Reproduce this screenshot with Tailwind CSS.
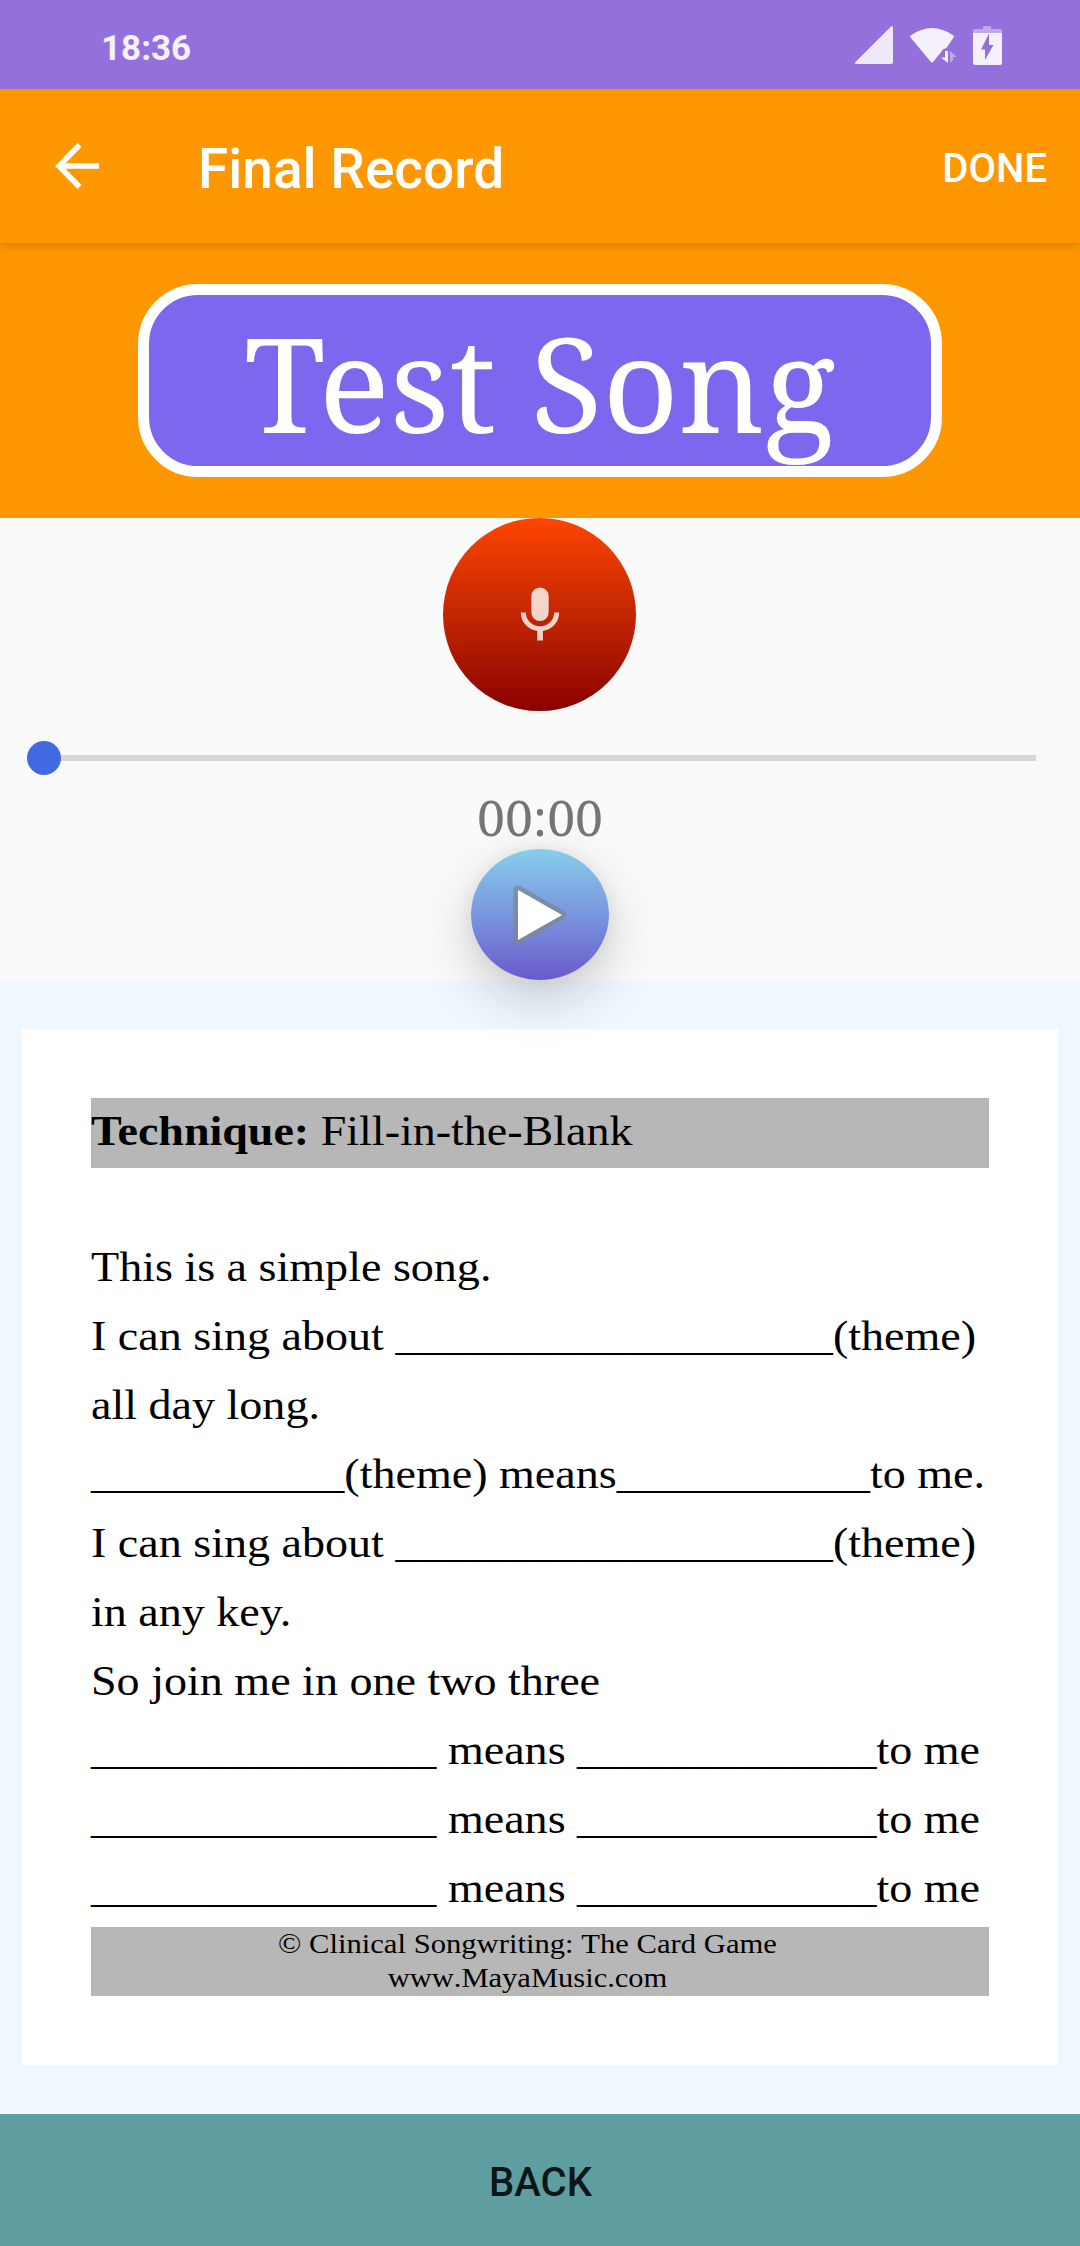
<!DOCTYPE html>
<html lang="en">
<head>
<meta charset="utf-8">
<title>Final Record</title>
<script src="https://cdn.jsdelivr.net/npm/@tailwindcss/browser@4"></script>
</head>
<body class="w-[1080px] h-[2246px] overflow-hidden flex flex-col bg-[#fafafa] font-['Roboto',sans-serif]">
  <header class="h-[89px] shrink-0 bg-[#9370db] flex items-center justify-between relative z-20">
    <span class="ml-[101px] mt-[8px] text-[35px] leading-none font-bold text-white/90">18:36</span>
    <svg class="w-[240px] h-[89px]" viewBox="0 0 240 89">
      <path d="M15.500 62L51 26.500Q53 25 53 27.500V62Q53 64 51 64H16.500Q14 64 15.500 62Z" fill="#fff" fill-opacity=".84"/>
      <path d="M70.500 35.500Q92 20.500 113.500 35.500Q114 36.500 113.500 37.500L106 48.500Q102.500 48 102 51L93 62Q92 63 91 62L70.500 37.500Q70 36.500 70.500 35.500Z" fill="#fff" fill-opacity=".9"/>
      <path d="M105 51h3v12l-7-5.500h4z" fill="#fff" fill-opacity=".9"/>
      <path d="M110 51l7 6h-4v3.500l-3 2.500z" fill="#fff" fill-opacity=".4"/>
      <path d="M133 33V31Q133 29 135 29H143V26H151V29H160Q162 29 162 31V33Z" fill="#fff" fill-opacity=".4"/>
      <path fill-rule="evenodd" d="M133 33H162V63Q162 65 160 65H135Q133 65 133 63ZM149 33.500L141 49.500H145V60L153.500 45H149Z" fill="#fff" fill-opacity=".9"/>
    </svg>
  </header>
  <nav class="h-[154px] shrink-0 bg-[#ff9800] flex items-center text-white font-medium relative z-10 shadow-[0_3px_9px_rgba(0,0,0,0.17)]">
    <svg class="ml-[55px] w-[44px] h-[46px]" viewBox="0 0 44 46"><path d="M44 23H5M24.500 2L4 23L24.500 44" fill="none" stroke="#fff" stroke-width="5.500"/></svg>
    <h1 class="ml-[99px] mt-[6px] text-[55px] leading-none">Final Record</h1>
    <button class="ml-auto mr-[33px] mt-[6px] text-[40px] leading-none">DONE</button>
  </nav>
  <section class="h-[275px] shrink-0 bg-[#ff9800] flex justify-center pt-[41px]">
    <div class="w-[804px] h-[193px] rounded-[60px] border-[11px] border-white bg-[#7b68ee] flex justify-center text-white">
      <span class="font-['Noto_Serif','DejaVu_Serif_Condensed',serif] text-[132.500px] leading-[174px] whitespace-nowrap">Test Song</span>
    </div>
  </section>
  <section class="h-[463px] shrink-0 flex flex-col items-center relative z-10">
    <button class="w-[193px] h-[193px] mr-px shrink-0 rounded-full bg-linear-to-b from-[#ff4500] to-[#8b0000] flex items-center justify-center">
      <svg class="w-[66px] h-[66px]" viewBox="0 0 66 66"><g opacity=".8"><rect x="24.300" y="5.500" width="17.400" height="33.500" rx="8.700" fill="#fff"/><path d="M16.300 30.500a16.700 16.200 0 0 0 33.400 0" fill="none" stroke="#fff" stroke-width="5"/><path d="M30.200 49H35.900V58.500H30.200Z" fill="#fff"/></g></svg>
    </button>
    <div class="mt-[30px] w-full h-[34px] pl-[27px] pr-[44px] flex items-center shrink-0">
      <i class="size-[34px] rounded-full bg-[#4169e1]"></i><i class="h-[6px] grow bg-[#d6d6d6]"></i>
    </div>
    <time class="mt-[14px] h-[60px] shrink-0 font-['Noto_Serif','Liberation_Serif',serif] text-[50px] leading-[56px] text-[#757575]">00:00</time>
    <button class="w-[138px] h-[131px] shrink-0 rounded-[50%] bg-linear-to-b from-[#87ceeb] to-[#6a5acd] shadow-[0_18px_54px_rgba(0,0,0,0.2),0_0_18px_rgba(0,0,0,0.06)] flex items-center justify-center">
      <svg class="w-[60px] h-[64px]" viewBox="0 0 60 64"><path d="M8 7L52 32L8 57Z" fill="none" stroke="#7f8792" stroke-opacity=".75" stroke-width="9" stroke-linejoin="round"/><path d="M8 7L52 32L8 57Z" fill="#fff"/></svg>
    </button>
  </section>
  <main class="h-[1133px] shrink-0 bg-[#f0f8ff] px-[22px] pt-[48px]">
    <article class="h-[1036px] bg-white px-[69px] pt-[69px] text-black font-['Liberation_Serif',serif] text-[43px] whitespace-nowrap [font-kerning:none]">
      <h2 class="h-[69.500px] bg-[#b7b7b7] leading-[66px]"><span class="inline-block origin-left scale-x-[1.07]"><b class="[font-kerning:normal]">Technique:</b> Fill-in-the-Blank</span></h2>
      <div class="h-[759px] pt-[64px] w-fit origin-left scale-x-[1.071] leading-[69.070px]">
        <p>This is a simple song.</p>
        <p>I can sing about ___________________(theme)</p>
        <p>all day long.</p>
        <p>___________(theme) means___________to me.</p>
        <p>I can sing about ___________________(theme)</p>
        <p class="[font-kerning:normal]">in any key.</p>
        <p>So join me in one two three</p>
        <p>_______________ means _____________to me</p>
        <p>_______________ means _____________to me</p>
        <p>_______________ means _____________to me</p>
      </div>
      <footer class="h-[69px] bg-[#b7b7b7] pr-[25px] text-center text-[28px] leading-[34px]">
        <p class="scale-x-[1.094]">© Clinical Songwriting: The Card Game</p>
        <p class="scale-x-[1.09]">www.MayaMusic.com</p>
      </footer>
    </article>
  </main>
  <button class="h-[132px] shrink-0 bg-[#5f9ea0] text-[#0e1718] text-[40px] font-medium flex items-center justify-center pt-[6px] pl-px">BACK</button>
</body>
</html>
